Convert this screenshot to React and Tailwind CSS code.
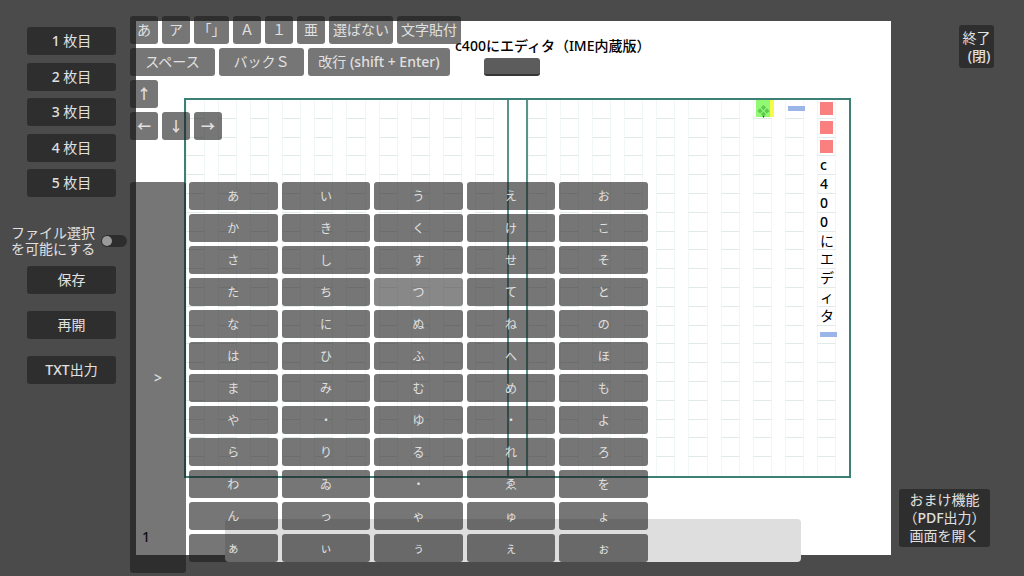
import { useState } from "react"

const FONT = "font-['Noto_Sans','Noto_Sans_CJK_JP',sans-serif]"
const KEY = "flex items-center justify-center rounded-[3px] bg-[#1a1a1a99] text-[#e0e0e0] hover:bg-[#3a3a3a99]"

const paginas = ["1", "2", "3", "4", "5"]

const modos = [
  { texto: "あ", ancho: "w-7" },
  { texto: "ア", ancho: "w-7" },
  { texto: "「」", ancho: "w-[35px]" },
  { texto: "Ａ", ancho: "w-7" },
  { texto: "１", ancho: "w-7" },
  { texto: "亜", ancho: "w-7" },
  { texto: "選ばない", ancho: "w-16" },
  { texto: "文字貼付", ancho: "w-16" },
]

const kana = [
  "あいうえお",
  "かきくけこ",
  "さしすせそ",
  "たちつてと",
  "なにぬねの",
  "はひふへほ",
  "まみむめも",
  "や・ゆ・よ",
  "らりるれろ",
  "わゐ・ゑを",
  "んっゃゅょ",
  "ぁぃぅぇぉ",
]

// Cada columna va de arriba a abajo, la primera es la de la derecha
const texto = [
  ["rojo", "rojo", "rojo", "c", "4", "0", "0", "に", "エ", "デ", "ィ", "タ", "azul"],
  ["azul"],
  ["cursor"],
]

function Marca({ tipo }) {
  if (tipo === "rojo") return <span className="size-[13px] shrink-0 bg-[#fa8080]" />
  if (tipo === "azul") return <span className="h-[5px] w-[17px] shrink-0 bg-[#9bb5e8]" />
  if (tipo === "cursor") {
    return (
      <svg className="h-[18px] w-[18px] shrink-0" viewBox="0 0 18 18">
        <rect width="18" height="17" fill="#f5fb4a" />
        <rect width="14" height="17" fill="#92fa72" />
        <g fill="#5fcb55">
          <path d="M7.500 5l2.600 2.600-2.600 2.600-2.600-2.600z" />
          <path d="M4 8.300l2.600 2.600L4 13.500 1.400 10.900z" />
          <path d="M11 8.300l2.600 2.600-2.600 2.600-2.600-2.600z" />
          <path d="M7.500 11.600l2.600 2.600-2.600 2.200-2.600-2.200z" />
        </g>
        <path d="M6.500 16h2l-1 2z" fill="#205020" />
      </svg>
    )
  }
  return <span className={/[a-z0-9]/.test(tipo) ? "font-medium" : ""}>{tipo}</span>
}

function Columna({ celdas = [] }) {
  return (
    <div className="grid h-full grid-rows-20 pr-[13px]">
      {Array.from({ length: 20 }, (_, i) => (
        <div
          key={i}
          className="flex min-h-0 min-w-0 items-center border-x border-b border-x-[#f1f7f6] border-b-[#e0eae9] pl-[2px] text-sm leading-[18px] text-black last:border-b-0"
        >
          {celdas[i] && <Marca tipo={celdas[i]} />}
        </div>
      ))}
    </div>
  )
}

function Hoja() {
  const derecha = Array.from({ length: 10 }, (_, i) => texto[9 - i])
  return (
    <div className="bg-white">
      <header className="h-[77px] pl-[319px] pt-[15px]">
        <h1 className="text-sm leading-5 font-medium whitespace-nowrap text-black">c400にエディタ（IME内蔵版）</h1>
        <button
          aria-label="題名"
          className="ml-[29px] mt-[2px] block h-[18px] w-14 rounded-[3px] border-b-2 border-[#353535] bg-[#5c5c5c]"
        />
      </header>

      <div className="ml-12 mr-10 flex h-[380px] border-2 border-[#3d8076]">
        <div className="grid flex-1 grid-cols-10 grid-rows-1">
          {Array.from({ length: 10 }, (_, i) => (
            <Columna key={i} />
          ))}
        </div>
        <div className="w-[21px] border-x-2 border-[#5a938b]" />
        <div className="grid flex-1 grid-cols-10 grid-rows-1">
          {derecha.map((celdas, i) => (
            <Columna key={i} celdas={celdas} />
          ))}
        </div>
      </div>

      <footer className="relative h-[77px] pl-[6px] pt-[49px]">
        <p className="text-sm leading-5 font-medium text-black">1</p>
        <textarea
          aria-label="入力"
          className="absolute left-[89px] right-[90px] top-[41px] h-[43px] resize-none rounded-[4px] bg-[#dedede]"
        />
      </footer>
    </div>
  )
}

function Teclado() {
  const [activa, setActiva] = useState("つ")

  return (
    <div className="absolute left-[130px] top-4 text-sm">
      <div className="flex h-[166px] flex-col gap-1">
        <div className="flex gap-1">
          {modos.map((m) => (
            <button key={m.texto} className={`${KEY} ${m.ancho} h-7 whitespace-nowrap`}>
              {m.texto}
            </button>
          ))}
        </div>
        <div className="flex gap-1">
          <button className={`${KEY} h-7 w-[85px]`}>スペース</button>
          <button className={`${KEY} h-7 w-[85px]`}>バックＳ</button>
          <button className={`${KEY} h-7 w-[142px] whitespace-nowrap`}>
            <span>
              改行 <span className="font-medium">(shift + Enter)</span>
            </span>
          </button>
        </div>
        <button className={`${KEY} size-7 font-bold`}>↑</button>
        <div className="flex gap-1">
          <button className={`${KEY} size-7 font-bold`}>←</button>
          <button className={`${KEY} size-7 font-bold`}>↓</button>
          <button className={`${KEY} size-7 font-bold`}>→</button>
        </div>
      </div>

      <div className="flex items-start gap-[3px]">
        <button className={`${KEY} h-[391px] w-14 font-medium`}>&gt;</button>
        <div className="grid w-[459px] grid-cols-5 gap-1 text-xs">
          {kana.map((fila, f) =>
            fila.split("").map((letra, c) => (
              <button
                key={`${f}-${c}`}
                onClick={() => setActiva(letra)}
                className={`${KEY} h-7 pt-0.5 ${letra === activa && letra !== "・" ? "bg-[#39393999]" : ""}`}
              >
                {letra}
              </button>
            ))
          )}
        </div>
      </div>
    </div>
  )
}

function App() {
  const [archivo, setArchivo] = useState(false)

  return (
    <div className={`relative flex min-h-screen items-stretch bg-[#4b4b4b] text-sm text-[#e0e0e0] ${FONT}`}>
      <aside className="w-[136px] shrink-0 pt-[27px]">
        <nav className="ml-[27px] flex h-[170px] w-[89px] flex-col justify-between">
          {paginas.map((p) => (
            <button key={p} className={`${KEY} h-7`}>
              <span>
                <span className="font-medium">{p}</span> 枚目
              </span>
            </button>
          ))}
        </nav>

        <label className="mt-7 flex items-center gap-[6px] pl-[11px] leading-4">
          <span className="whitespace-nowrap">
            ファイル選択
            <br />
            を可能にする
          </span>
          <input
            type="checkbox"
            checked={archivo}
            onChange={(e) => setArchivo(e.target.checked)}
            className="h-3 w-[26px] shrink-0 appearance-none rounded-full bg-[#2d2d2d] before:ml-[1px] before:mt-[1px] before:block before:size-[10px] before:rounded-full before:bg-[#9a9a9a] checked:before:ml-[15px]"
          />
        </label>

        <div className="ml-[27px] mt-[9px] flex w-[89px] flex-col gap-[17px]">
          <button className={`${KEY} h-7`}>保存</button>
          <button className={`${KEY} h-7`}>再開</button>
          <button className={`${KEY} h-7`}>
            <span className="font-medium">TXT</span>出力
          </button>
        </div>
      </aside>

      <main className="min-w-0 flex-1 pt-[21px]">
        <Hoja />
      </main>

      <aside className="flex w-[133px] shrink-0 flex-col justify-between pb-[29px] pt-[25px]">
        <button className={`${KEY} ml-[68px] h-[43px] w-[35px] leading-[18px]`}>
          <span className="text-right">
            終了
            <br />
            <span className="font-medium">(閉)</span>
          </span>
        </button>
        <button className={`${KEY} ml-2 h-[58px] w-[91px] leading-[18px]`}>
          <span className="whitespace-nowrap">
            おまけ機能
            <br />
            （<span className="font-medium">PDF</span>出力）
            <br />
            画面を開く
          </span>
        </button>
      </aside>

      <Teclado />
    </div>
  )
}

export default App
